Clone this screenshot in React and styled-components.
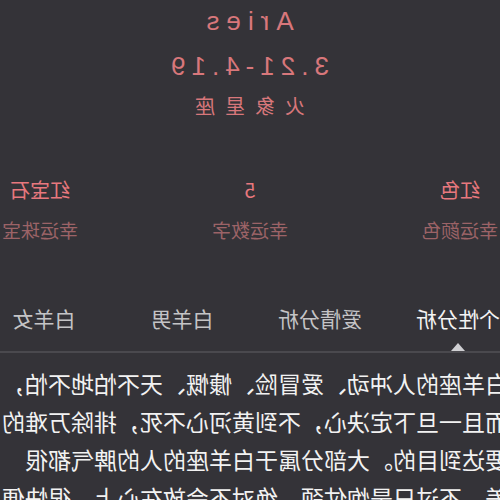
import styled, { createGlobalStyle } from 'styled-components';

const Global = createGlobalStyle`
  html, body {
    margin: 0;
    padding: 0;
    background: #343338;
  }
`;

// the whole shot is a mirror image of the page
const Page = styled.div`
  width: 500px;
  height: 500px;
  overflow: hidden;
  background: #343338;
  transform: scaleX(-1);
  font-family: "Noto Sans CJK SC", "Liberation Sans", sans-serif;
`;

const Header = styled.header`
  display: flex;
  flex-direction: column;
  align-items: center;
  padding-top: 6px;
  color: #d8777b;
`;

const Latin = styled.div`
  font-family: "Liberation Sans", sans-serif;
  font-size: ${p => p.size}px;
  line-height: 30px;
  letter-spacing: ${p => p.spacing}px;
  margin-top: ${p => p.top || 0}px;
  padding-left: ${p => p.spacing}px;
`;

const Element = styled.div`
  font-size: 20px;
  line-height: 28px;
  letter-spacing: 10px;
  padding-left: 10px;
  margin-top: 11px;
`;

const Stats = styled.section`
  display: grid;
  grid-template-columns: repeat(3, 210px);
  width: 630px;
  margin: 56px 0 0 -65px;
`;

const Stat = styled.div`
  display: flex;
  flex-direction: column;
  align-items: center;
  gap: 12px;
`;

const Value = styled.div`
  font-size: 20px;
  line-height: 28px;
  color: #e8787e;
`;

const Label = styled.div`
  font-size: 19px;
  line-height: 28px;
  color: #9c6367;
`;

const Tabs = styled.nav`
  display: grid;
  grid-template-columns: repeat(4, 138px);
  width: 552px;
  margin: 36px 0 0 -27px;
  border-bottom: 2px solid #4a494e;
`;

const Tab = styled.div`
  position: relative;
  text-align: center;
  font-size: 21px;
  line-height: 28px;
  padding: 24px 0 19px;
  color: ${p => (p.active ? '#f4f4f4' : '#c4c4c6')};

  &::after {
    content: '';
    display: ${p => (p.active ? 'block' : 'none')};
    position: absolute;
    left: 50%;
    bottom: 0;
    margin-left: -7px;
    border: 7px solid transparent;
    border-bottom: 8px solid #cfcfd2;
    border-top: 0;
  }
`;

const Body = styled.p`
  margin: 11px 0 0 -8px;
  width: 516px;
  font-size: 23px;
  line-height: 38px;
  color: #f2f2f2;
`;

const stats = [
  { value: '红色', label: '幸运颜色' },
  { value: '5', label: '幸运数字' },
  { value: '红宝石', label: '幸运珠宝' }
];

const tabs = ['个性分析', '爱情分析', '白羊男', '白羊女'];

export default function App() {
  return (
    <Page>
      <Global />
      <Header>
        <Latin size={26} spacing={7}>Aries</Latin>
        <Latin size={26} spacing={6} top={15}>3.21-4.19</Latin>
        <Element>火象星座</Element>
      </Header>
      <Stats>
        {stats.map(s => (
          <Stat key={s.label}>
            <Value>{s.value}</Value>
            <Label>{s.label}</Label>
          </Stat>
        ))}
      </Stats>
      <Tabs>
        {tabs.map((t, i) => (
          <Tab key={t} active={i === 0}>{t}</Tab>
        ))}
      </Tabs>
      <Body>
        白羊座的人冲动、爱冒险、慷慨、天不怕地不怕，而且一旦下定决心，不到黄河心不死，排除万难的要达到目的。大部分属于白羊座的人的脾气都很差，不过只是炮仗颈，绝对不会放在心上，很快便会烟消云散。
      </Body>
    </Page>
  );
}
